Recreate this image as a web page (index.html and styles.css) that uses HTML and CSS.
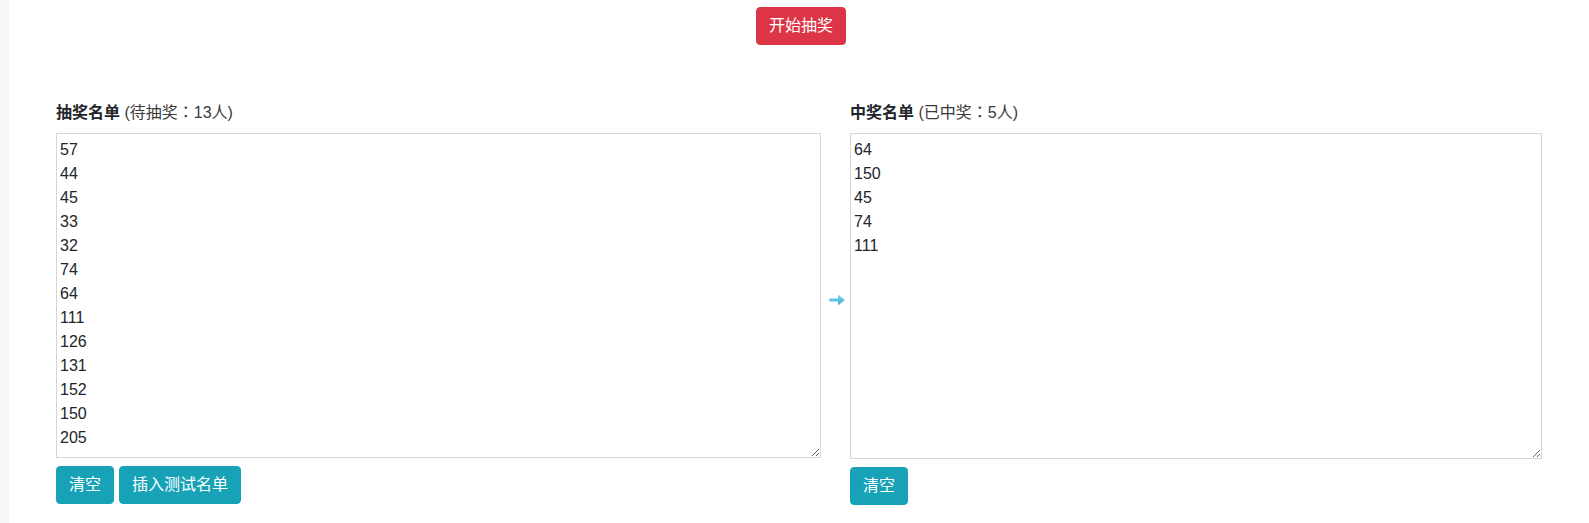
FILE: index.html
```html
<!DOCTYPE html>
<html lang="zh">
<head>
<meta charset="utf-8">
<title>抽奖</title>
<link rel="stylesheet" href="styles.css">
</head>
<body>
<div class="layout">
  <aside class="side"></aside>
  <main class="main">
    <div class="top">
      <button class="btn btn-danger">开始抽奖</button>
    </div>
    <div class="lists">
      <div class="col">
        <label class="lbl"><b>抽奖名单</b> <span class="sub" lang="zh-Hant">(待抽奖：13人)</span></label>
        <textarea class="box box-left">57
44
45
33
32
74
64
111
126
131
152
150
205</textarea>
        <div class="actions">
          <button class="btn btn-info">清空</button>
          <button class="btn btn-info">插入测试名单</button>
        </div>
      </div>
      <div class="arrow-col">
        <svg class="arrow" width="16" height="12" viewBox="0 0 16 12">
          <defs>
            <linearGradient id="ag" x1="0" y1="0" x2="0" y2="1">
              <stop offset="0" stop-color="#86d3ec"/>
              <stop offset="1" stop-color="#3aaed3"/>
            </linearGradient>
          </defs>
          <path d="M1 4.5 H9 V1.2 Q9 0.6 9.6 1 L15.3 5.5 Q15.8 6 15.3 6.5 L9.6 11 Q9 11.4 9 10.8 V7.5 H1 Q0.4 7.5 0.4 6.9 V5.1 Q0.4 4.5 1 4.5 Z" fill="url(#ag)"/>
        </svg>
      </div>
      <div class="col">
        <label class="lbl"><b>中奖名单</b> <span class="sub" lang="zh-Hant">(已中奖：5人)</span></label>
        <textarea class="box box-right">64
150
45
74
111</textarea>
        <div class="actions">
          <button class="btn btn-info">清空</button>
        </div>
      </div>
    </div>
  </main>
</div>
</body>
</html>
```
FILE: styles.css
```css
html, body {
  margin: 0;
  padding: 0;
  background: #fff;
}
body {
  font-family: "Liberation Sans", "Noto Sans CJK SC", sans-serif;
  font-size: 16px;
  line-height: 1.5;
  color: #212529;
}
.layout {
  display: flex;
  min-height: 523px;
}
.side {
  width: 9px;
  flex: none;
  background: #f4f6f9;
}
.main {
  flex: 1;
  padding: 0 47px;
}
.top {
  display: flex;
  justify-content: center;
  padding-top: 7px;
  padding-left: 4px;
}
.btn {
  font-family: "Liberation Sans", "Noto Sans CJK SC", sans-serif;
  font-size: 16px;
  line-height: 24px;
  padding: 6px 12px;
  border: 1px solid transparent;
  border-radius: 4px;
  color: #fff;
  cursor: pointer;
}
.btn-danger {
  background: #dc3545;
  border-color: #dc3545;
}
.btn-info {
  background: #17a2b8;
  border-color: #17a2b8;
}
.lists {
  display: grid;
  grid-template-columns: 765px 29px 1fr;
  margin-top: 56px;
}
.col {
  display: flex;
  flex-direction: column;
}
.lbl {
  display: block;
  margin-bottom: 8px;
  line-height: 24px;
}
.lbl b {
  font-weight: 700;
}
.sub {
  font-family: "Liberation Sans", "Noto Sans CJK TC", sans-serif;
  font-size: 16px;
  color: #3a3a3a;
}
.box {
  box-sizing: border-box;
  width: 100%;
  margin: 0;
  padding: 4px 3px 2px;
  border: 1px solid #d6d6d6;
  font-family: "Liberation Sans", "Noto Sans CJK SC", sans-serif;
  font-size: 16px;
  line-height: 24px;
  color: #212529;
  background: #fff;
  outline: none;
}
.box-left {
  height: 325px;
}
.box-right {
  height: 326px;
}
.actions {
  display: flex;
  gap: 5px;
  margin-top: 8px;
}
.arrow-col {
  display: flex;
  align-items: flex-start;
  justify-content: center;
  padding-top: 193px;
  padding-left: 3px;
}
.arrow {
  display: block;
}
```
